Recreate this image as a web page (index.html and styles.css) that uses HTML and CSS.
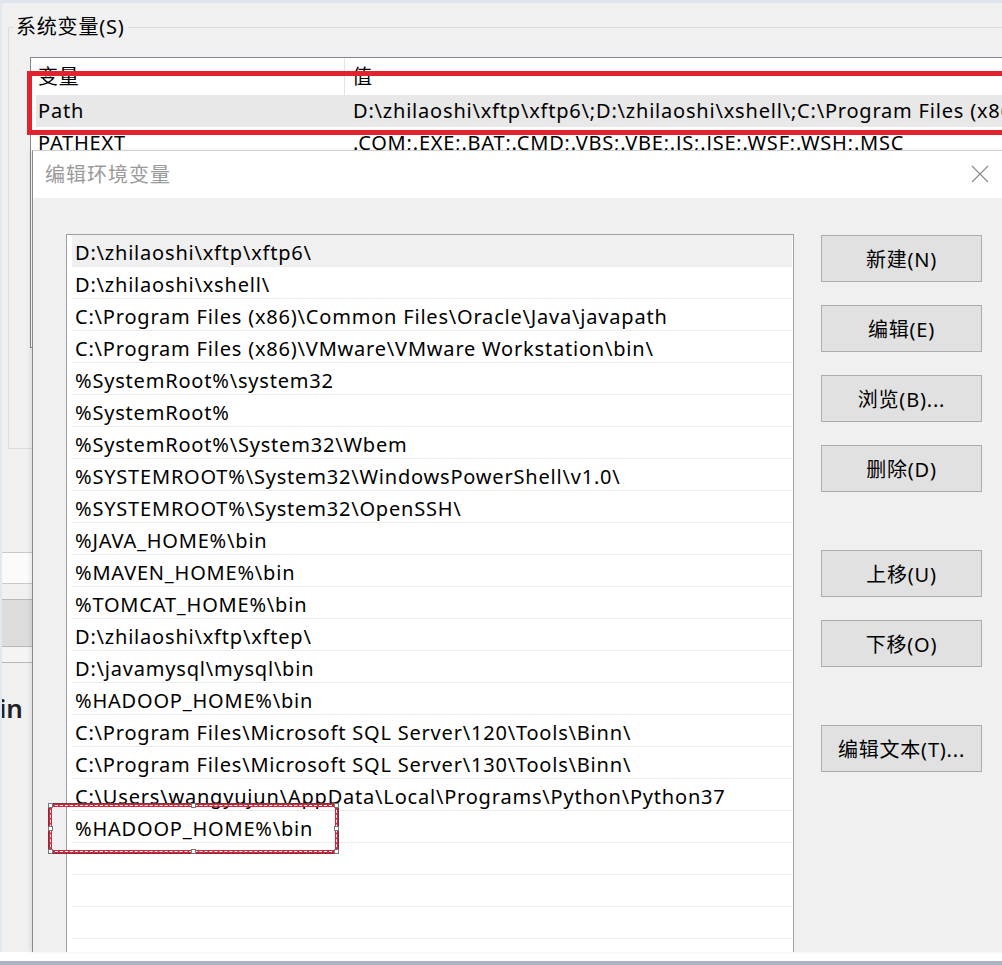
FILE: index.html
```html
<!DOCTYPE html>
<html lang="zh-CN">
<head>
<meta charset="utf-8">
<title>编辑环境变量</title>
<link rel="stylesheet" href="styles.css">
</head>
<body>
<div class="window">
  <div class="topbar"></div>
  <div class="group">
    <div class="group-head">
      <span class="seg"></span>
      <span class="group-label">系统变量(S)</span>
      <span class="line"></span>
    </div>
    <div class="group-body">
      <div class="sysvars">
        <div class="sv-head">
          <div class="sv-c1">变量</div>
          <div class="sv-c2">值</div>
        </div>
        <div class="sv-row sv-sel">
          <div class="sv-c1">Path</div>
          <div class="sv-c2">D:\zhilaoshi\xftp\xftp6\;D:\zhilaoshi\xshell\;C:\Program Files (x86)\Common Files\Oracle\Java\javapath</div>
        </div>
        <div class="sv-row">
          <div class="sv-c1">PATHEXT</div>
          <div class="sv-c2">.COM;.EXE;.BAT;.CMD;.VBS;.VBE;.JS;.JSE;.WSF;.WSH;.MSC</div>
        </div>
      </div>
    </div>
  </div>
  <div class="lower">
    <div class="field"></div>
    <div class="bar"></div>
    <div class="bar-foot"></div>
    <div class="cut-text">in</div>
  </div>
</div>
<div class="footer"></div>

<div class="dialog">
  <div class="titlebar">
    <span class="title">编辑环境变量</span>
    <svg class="close" width="18" height="18" viewBox="0 0 18 18"><path d="M1 1 L17 17 M17 1 L1 17" stroke="#8a8a8a" stroke-width="1.1" fill="none"/></svg>
  </div>
  <div class="dlg-body">
    <div class="pathlist">
      <div class="row sel">D:\zhilaoshi\xftp\xftp6\</div>
      <div class="row">D:\zhilaoshi\xshell\</div>
      <div class="row">C:\Program Files (x86)\Common Files\Oracle\Java\javapath</div>
      <div class="row">C:\Program Files (x86)\VMware\VMware Workstation\bin\</div>
      <div class="row">%SystemRoot%\system32</div>
      <div class="row">%SystemRoot%</div>
      <div class="row">%SystemRoot%\System32\Wbem</div>
      <div class="row">%SYSTEMROOT%\System32\WindowsPowerShell\v1.0\</div>
      <div class="row">%SYSTEMROOT%\System32\OpenSSH\</div>
      <div class="row">%JAVA_HOME%\bin</div>
      <div class="row">%MAVEN_HOME%\bin</div>
      <div class="row">%TOMCAT_HOME%\bin</div>
      <div class="row">D:\zhilaoshi\xftp\xftep\</div>
      <div class="row">D:\javamysql\mysql\bin</div>
      <div class="row">%HADOOP_HOME%\bin</div>
      <div class="row">C:\Program Files\Microsoft SQL Server\120\Tools\Binn\</div>
      <div class="row">C:\Program Files\Microsoft SQL Server\130\Tools\Binn\</div>
      <div class="row">C:\Users\wangyujun\AppData\Local\Programs\Python\Python37</div>
      <div class="row">%HADOOP_HOME%\bin</div>
      <div class="row"></div>
      <div class="row"></div>
      <div class="row"></div>
      <div class="row"></div>
    </div>
    <div class="buttons">
      <button class="btn">新建(N)</button>
      <button class="btn">编辑(E)</button>
      <button class="btn">浏览(B)...</button>
      <button class="btn">删除(D)</button>
      <button class="btn far">上移(U)</button>
      <button class="btn">下移(O)</button>
      <button class="btn far">编辑文本(T)...</button>
    </div>
  </div>
</div>

<div class="mark-top"></div>
<div class="mark-entry">
  <span class="h h-tl"></span><span class="h h-tm"></span><span class="h h-tr"></span>
  <span class="h h-ml"></span><span class="h h-mr"></span>
  <span class="h h-bl"></span><span class="h h-bm"></span><span class="h h-br"></span>
</div>
</body>
</html>
```

FILE: styles.css
```css
* { box-sizing: border-box; }

html, body {
  margin: 0;
  padding: 0;
}

body {
  width: 1002px;
  height: 965px;
  overflow: hidden;
  position: relative;
  display: flex;
  flex-direction: column;
  background: #f0f0f0;
  color: #000;
  font-family: "Noto Sans", "Noto Sans CJK SC", sans-serif;
  font-size: 20px;
  letter-spacing: 0.8px;
}

.window {
  flex: 1;
  overflow: hidden;
  background: #f0f0f0;
  border-left: 2px solid #e2e8ef;
}

.topbar {
  height: 3px;
  background: #dde4ec;
}

/* group box */
.group {
  margin: 10px 0 0 6px;
}

.group-head {
  display: flex;
  align-items: flex-start;
  height: 15px;
}

.seg {
  width: 6px;
  height: 15px;
  border-bottom: 1px solid #dcdcdc;
}

.line {
  flex: 1;
  height: 15px;
  border-bottom: 1px solid #dcdcdc;
}

.group-label {
  line-height: 28px;
  height: 28px;
  padding: 0 3px 0 2px;
  color: #000;
}

.group-body {
  height: 421px;
  border-left: 1px solid #dcdcdc;
  border-bottom: 1px solid #dcdcdc;
  padding: 29px 0 0 21px;
  overflow: hidden;
}

.sysvars {
  width: 1000px;
  height: 291px;
  background: #fff;
  border: 1px solid #828790;
}

.sv-head {
  display: flex;
  height: 37px;
  line-height: 37px;
}

.sv-head .sv-c1 {
  flex-shrink: 0;
  width: 314px;
  padding-left: 7px;
  border-right: 1px solid #e5e5e5;
}

.sv-head .sv-c2 {
  padding-left: 7px;
}

.sv-row {
  display: flex;
  height: 32px;
  line-height: 32px;
  margin-left: 5px;
  white-space: nowrap;
}

.sv-sel {
  background: #e8e8e8;
}

.sv-row .sv-c1 {
  flex-shrink: 0;
  width: 309px;
  padding-left: 2px;
}

.sv-row .sv-c2 {
  padding-left: 8px;
}

/* lower left remnants of the window behind */
.lower {
  margin-top: 103px;
}

.field {
  height: 32px;
  background: #fbfbfb;
  border-top: 1px solid #c9c9c9;
  border-bottom: 1px solid #c9c9c9;
}

.bar {
  margin-top: 15px;
  height: 48px;
  background: #dcdcdc;
  border-top: 1px solid #b8b8b8;
  border-bottom: 1px solid #b8b8b8;
}

.bar-foot {
  height: 16px;
  background: #f4f4f4;
  border-bottom: 1px solid #b8b8b8;
}

.cut-text {
  margin: 30px 0 0 -3px;
  font-size: 26px;
  font-weight: 600;
  line-height: 30px;
  letter-spacing: 0;
  color: #222;
}

.footer {
  height: 13px;
  background: #fff;
  border-bottom: 4px solid #a9b3c1;
}

/* dialog */
.dialog {
  position: absolute;
  left: 32px;
  top: 150px;
  width: 980px;
  height: 802px;
  background: #f0f0f0;
  border-left: 1px solid #8a8a8a;
  border-top: 1px solid #d0d0d0;
  overflow: hidden;
  box-shadow: -2px 0 4px rgba(0, 0, 0, 0.08);
}

.titlebar {
  height: 47px;
  background: #fff;
  display: flex;
  align-items: center;
  justify-content: space-between;
  padding: 0 23px 3px 12px;
}

.title {
  color: #9a9a9a;
  font-size: 20px;
  letter-spacing: 1px;
}

.close {
  display: block;
  margin-top: 1px;
}

.dlg-body {
  display: flex;
  align-items: flex-start;
  gap: 27px;
  padding: 36px 0 0 33px;
}

.pathlist {
  width: 728px;
  height: 740px;
  background: #fff;
  border: 1px solid #a0a0a0;
  padding: 0 1px 0 5px;
  overflow: hidden;
}

.row {
  height: 32px;
  line-height: 31px;
  padding: 2px 0 0 3px;
  border-bottom: 1px solid #ececec;
  white-space: nowrap;
}

.row.sel {
  background: #f0f0f0;
}

.buttons {
  display: flex;
  flex-direction: column;
  gap: 23px;
  padding-top: 1px;
}

.btn {
  width: 161px;
  height: 47px;
  margin: 0;
  padding: 0;
  background: #e1e1e1;
  border: 1px solid #adadad;
  font-family: "Noto Sans", "Noto Sans CJK SC", sans-serif;
  font-size: 20px;
  letter-spacing: 0.8px;
  color: #000;
}

.btn.far {
  margin-top: 35px;
}

/* annotations */
.mark-top {
  position: absolute;
  left: 27px;
  top: 71px;
  width: 1020px;
  height: 64px;
  border: 5px solid #e0232d;
}

.mark-entry {
  position: absolute;
  left: 49px;
  top: 804px;
  width: 289px;
  height: 49px;
  border: 3px solid #d3283a;
  outline: 1px solid #7a3040;
}

.mark-entry::after {
  content: "";
  position: absolute;
  inset: -2px;
  border: 1px dashed #fff;
}

.h {
  position: absolute;
  width: 5px;
  height: 5px;
  background: #fff;
  border: 1px solid #777;
  z-index: 1;
}

.h-tl { left: -4px; top: -4px; }
.h-tm { left: calc(50% - 3px); top: -4px; }
.h-tr { right: -4px; top: -4px; }
.h-ml { left: -4px; top: calc(50% - 3px); }
.h-mr { right: -4px; top: calc(50% - 3px); }
.h-bl { left: -4px; bottom: -4px; }
.h-bm { left: calc(50% - 3px); bottom: -4px; }
.h-br { right: -4px; bottom: -4px; }
```
